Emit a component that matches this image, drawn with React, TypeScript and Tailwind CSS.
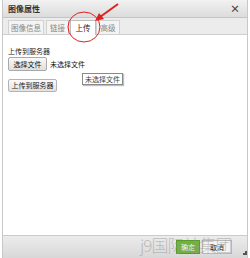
import React from "react"

const font = { fontFamily: '"Noto Sans CJK SC", "Liberation Sans", sans-serif' }

const tabs = [
  { label: "图像信息", cls: "w-[36px] ml-0" },
  { label: "链接", cls: "w-[23px] ml-[2px]" },
  { label: "上传", cls: "w-[26px] ml-[1px]", active: true },
  { label: "高级", cls: "w-[24px] ml-0" },
]

export default function App() {
  return (
    <div className="relative w-[250px] h-[258px] bg-white overflow-hidden" style={font}>
      <div className="ml-[2px] mr-[2px] h-full flex flex-col border-l border-r border-[#c8c8c8]">
        {/* title */}
        <div className="h-[18px] flex items-center justify-between px-[5px] bg-gradient-to-b from-[#f2f2f2] to-[#dcdcdc] border-b border-[#c4c4c4]">
          <span className="text-[8px] font-bold text-[#333] leading-none">图像属性</span>
          <span className="text-[10px] font-bold text-[#444] leading-none mr-[2px]">×</span>
        </div>

        {/* tabs */}
        <div className="h-[17px] flex items-end pl-[5px] bg-[#ececec] border-b border-[#cfcfcf]">
          {tabs.map((t) => (
            <div
              key={t.label}
              className={
                t.active
                  ? `${t.cls} h-[15px] flex items-center justify-center bg-white border border-b-0 border-[#bdbdbd] text-[7.5px] text-[#222] -mb-px`
                  : `${t.cls} h-[14px] flex items-center justify-center bg-[#f4f4f4] border border-b-0 border-[#d2d2d2] text-[7.5px] text-[#888]`
              }
            >
              {t.label}
            </div>
          ))}
        </div>

        {/* content */}
        <div className="flex-1 px-[5px] pt-[13px] flex flex-col items-start">
          <div className="text-[7px] text-[#222] leading-none">上传到服务器</div>
          <div className="mt-[2px] flex items-center gap-[3px]">
            <button className="h-[14px] w-[39px] text-[7px] leading-none text-[#111] bg-gradient-to-b from-[#fafafa] to-[#dedede] border border-[#a9a9a9] rounded-[2px]">
              选择文件
            </button>
            <span className="text-[7px] text-[#111]">未选择文件</span>
          </div>
          <button className="mt-[8px] h-[13px] w-[49px] text-[7px] leading-none text-[#222] bg-gradient-to-b from-[#fafafa] to-[#e2e2e2] border border-[#b4b4b4] rounded-[2px]">
            上传到服务器
          </button>
        </div>

        {/* footer */}
        <div className="h-[23px] bg-gradient-to-b from-[#ececec] to-[#d8d8d8] border-t border-[#cbcbcb] flex items-center justify-end pr-[15px] gap-[2px]">
          <button className="h-[14px] w-[24px] text-[7px] text-white bg-[#6fb23a] border border-[#5a9a2a] leading-none">确定</button>
          <button className="h-[14px] w-[30px] text-[7px] text-[#222] bg-[#f4f4f4] border border-[#b8b8b8] leading-none">取消</button>
        </div>
      </div>

      {/* tooltip */}
      <div className="absolute left-[82px] top-[73px] px-[2px] h-[12px] flex items-center text-[7px] text-[#444] bg-white border border-[#8a8a8a] shadow-[1px_1px_1px_rgba(0,0,0,0.25)]">
        未选择文件
      </div>

      {/* watermark */}
      <div className="absolute left-[140px] top-[236px] text-[17px] leading-none text-[#9a9a9a] opacity-55 tracking-[-1px] font-extralight">
        j9国际站集团
      </div>

      {/* resize grip */}
      <div className="absolute right-[3px] bottom-[3px] w-[4px] h-[4px] border-r-2 border-b-2 border-[#555]" />

      {/* annotation */}
      <svg className="absolute left-0 top-0" width="250" height="258" viewBox="0 0 250 258">
        <ellipse cx="84" cy="27" rx="16" ry="15" fill="none" stroke="#e02020" strokeWidth="1" />
        <path d="M118 4 L100 17" stroke="#e02020" strokeWidth="2" fill="none" />
        <path d="M95 21 L99 13 L104 19 Z" fill="#e02020" />
      </svg>
    </div>
  )
}
